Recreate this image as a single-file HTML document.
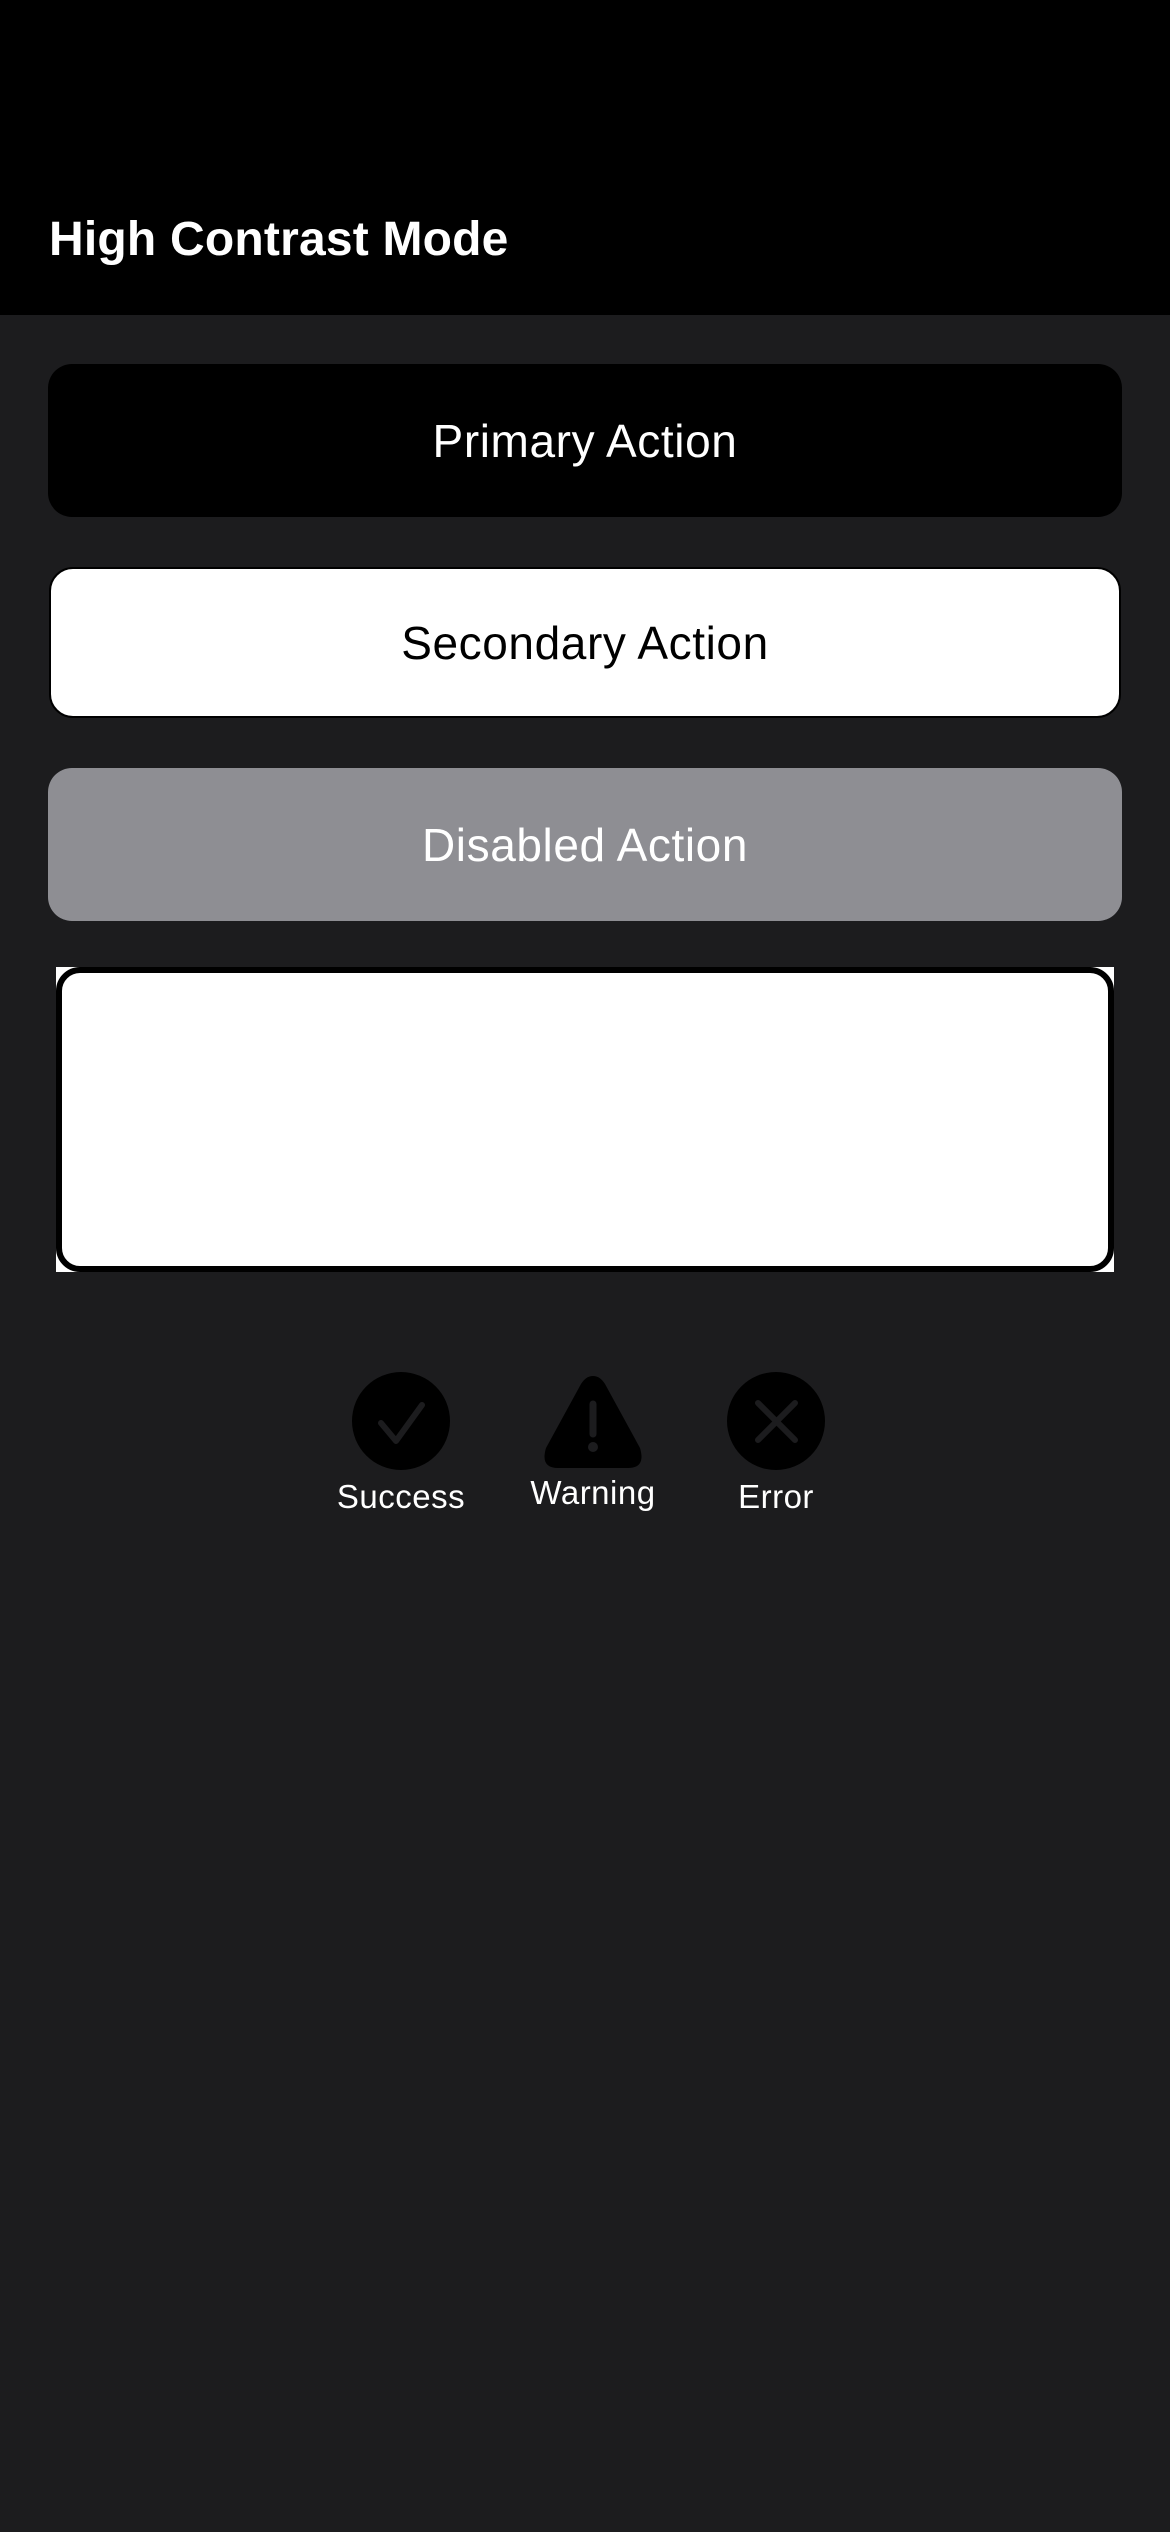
<!DOCTYPE html>
<html><head><meta charset="utf-8"><style>
*{margin:0;padding:0;box-sizing:border-box}
body{width:1170px;height:2532px;background:#1c1c1e;font-family:"Liberation Sans",sans-serif;position:relative;overflow:hidden}
.hdr{position:absolute;left:0;top:0;width:1170px;height:315px;background:#000}
.title{position:absolute;left:49px;top:212px;font-size:48px;font-weight:bold;color:#fff;letter-spacing:0.2px}
.btn{position:absolute;left:48px;width:1074px;height:153px;border-radius:24px;display:flex;align-items:center;justify-content:center;font-size:46px;letter-spacing:0.6px}
.lbl{position:absolute;font-size:33px;color:#fff;transform:translateX(-50%);top:1478px;letter-spacing:0.5px}
</style></head><body>
<div class="hdr"></div>
<div class="title">High Contrast Mode</div>
<div class="btn" style="top:364px;background:#000;color:#fff">Primary Action</div>
<div class="btn" style="top:567px;height:151px;background:#fff;color:#000;border:2px solid #000;left:49px;width:1072px">Secondary Action</div>
<div class="btn" style="top:768px;background:#8e8e93;color:#fff">Disabled Action</div>
<div style="position:absolute;left:56px;top:967px;width:1058px;height:305px;background:#fff"></div>
<div style="position:absolute;left:56px;top:967px;width:1058px;height:305px;border:6px solid #000;border-radius:24px;background:#fff"></div>
<svg style="position:absolute;left:0;top:0" width="1170" height="1600">
<circle cx="401" cy="1421" r="49" fill="#000"/>
<path d="M381 1423 L396 1441 L422 1405" stroke="#1c1c1e" stroke-width="6" fill="none" stroke-linecap="round" stroke-linejoin="round"/>
<path d="M593 1376 Q600 1376 605 1384 L640 1448 Q646 1468 628 1468 L558 1468 Q540 1468 546 1448 L581 1384 Q586 1376 593 1376Z" fill="#000"/>
<line x1="593" y1="1404" x2="593" y2="1434" stroke="#1c1c1e" stroke-width="7" stroke-linecap="round"/>
<circle cx="593" cy="1447" r="5" fill="#1c1c1e"/>
<circle cx="776" cy="1421" r="49" fill="#000"/>
<path d="M758 1403 L795 1440 M795 1403 L758 1440" stroke="#1c1c1e" stroke-width="6" stroke-linecap="round"/>
</svg>
<div class="lbl" style="left:401px">Success</div>
<div class="lbl" style="left:593px;top:1474px">Warning</div>
<div class="lbl" style="left:776px">Error</div>
</body></html>
